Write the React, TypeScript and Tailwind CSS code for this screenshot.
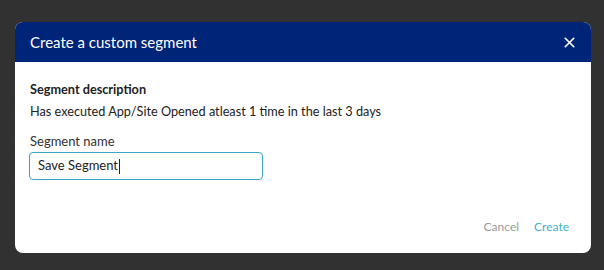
import { X } from "lucide-react";

export default function App() {
  return (
    <div
      className="h-[270px] w-[604px] overflow-hidden bg-[#313131] pl-[15px] pt-[22px]"
      style={{ fontFamily: "Lato, 'Noto Sans', sans-serif" }}
    >
      <div className="flex h-[231px] w-[576px] flex-col overflow-hidden rounded-lg bg-white">
        {/* Header */}
        <div className="flex h-10 items-center justify-between bg-[#002478] pl-[15px] pr-[13px]">
          <span className="text-[15px] text-white">Create a custom segment</span>
          <X className="h-[17px] w-[17px] text-white" strokeWidth={2.3} />
        </div>

        {/* Body */}
        <div className="flex flex-1 flex-col px-[15px] pt-[17px]">
          <div className="text-[12.7px] font-bold leading-5 text-[#222]">
            Segment description
          </div>
          <div className="mt-[2px] text-[12.7px] leading-5 text-[#222]">
            Has executed App/Site Opened atleast 1 time in the last 3 days
          </div>
          <div className="mt-[10px] text-[13px] leading-5 text-[#333]">Segment name</div>
          <div className="ml-[-1px] mt-px flex h-[28px] w-[234px] items-center rounded border border-[#3aa5c0] px-2 text-[13px] text-[#222]">
            Save Segment
            <span className="ml-px h-[15px] w-px bg-[#222]" />
          </div>
          <div className="mt-auto flex justify-end gap-[15px] pb-[17px] pr-[7px] text-[12px]">
            <span className="text-[#9a9a9a]">Cancel</span>
            <span className="text-[#3fb0c6]">Create</span>
          </div>
        </div>
      </div>
    </div>
  );
}
